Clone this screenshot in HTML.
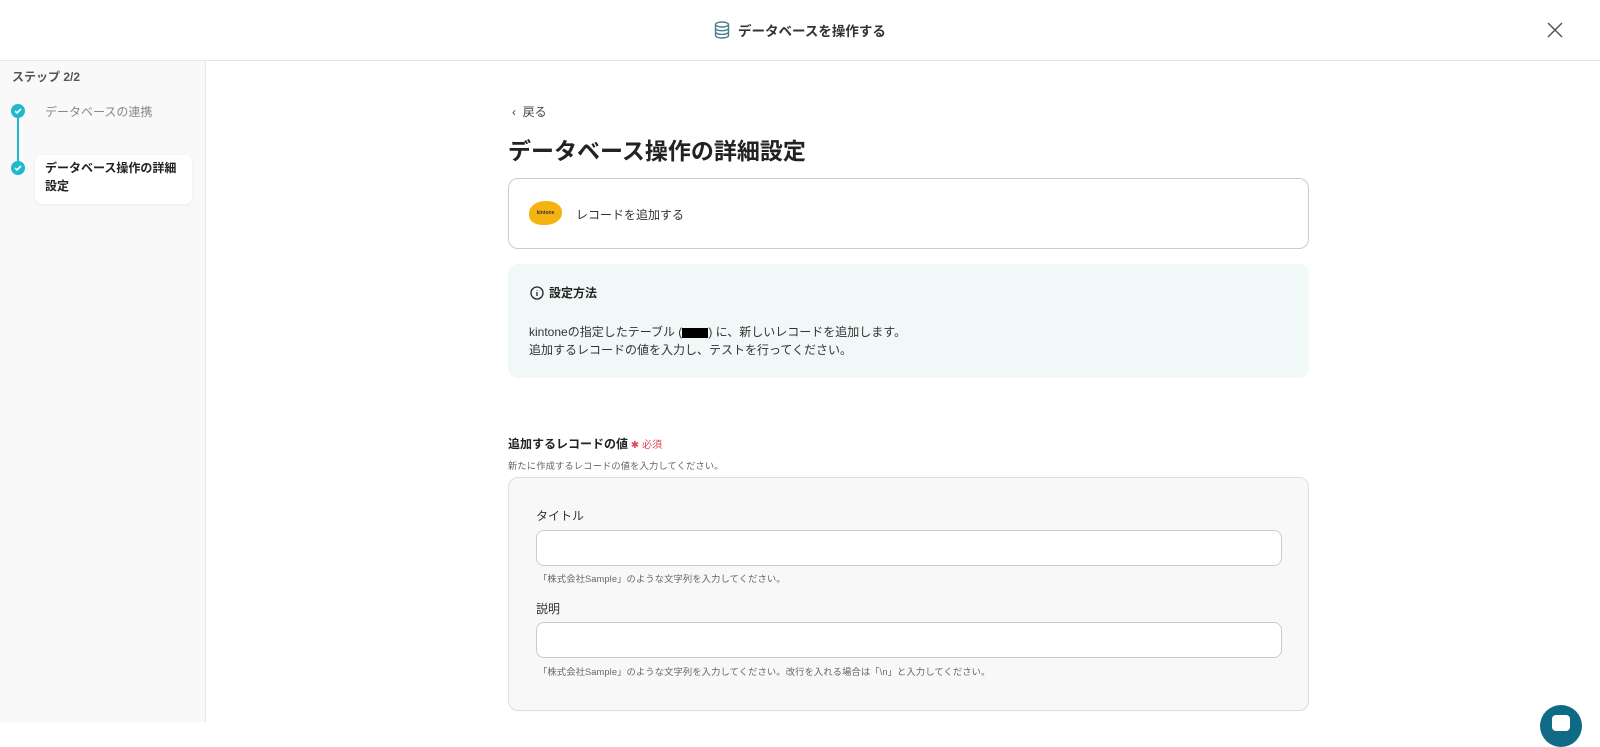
<!DOCTYPE html>
<html><head><meta charset="utf-8"><style>
*{box-sizing:border-box;margin:0;padding:0}
body{width:1600px;height:722px;overflow:hidden;background:#fff;font-family:"Liberation Sans","Noto Sans CJK JP",sans-serif;color:#222;position:relative}
.hdr{position:absolute;left:0;top:0;width:1600px;height:61px;border-bottom:1px solid #e6e6e6;background:#fff}
.hdr .t{position:absolute;left:714px;top:20px;font-size:13.5px;font-weight:bold;color:#333;display:flex;align-items:center;gap:8px}
.side{position:absolute;left:0;top:61px;width:206px;height:661px;background:#f9f9f9;border-right:1px solid #e8e8e8}
.abs{position:absolute}
.dot{width:14px;height:14px;border-radius:50%;background:#1fb8cc;display:flex;align-items:center;justify-content:center}
.box{position:absolute;border:1px solid #ccc;border-radius:10px}
.inp{position:absolute;left:536px;width:746px;height:36px;background:#fff;border:1px solid #ccc;border-radius:8px}
.sm{font-size:9.3px;color:#666;letter-spacing:0.1px}
</style></head><body>
<div class="hdr"><div class="t">
<svg width="16" height="18" viewBox="0 0 16 18" fill="none" stroke="#4a7d8a" stroke-width="1.4"><ellipse cx="8" cy="3.5" rx="6.5" ry="2.5"/><path d="M1.5 3.5v11c0 1.4 2.9 2.5 6.5 2.5s6.5-1.1 6.5-2.5v-11M1.5 7.2c0 1.4 2.9 2.5 6.5 2.5s6.5-1.1 6.5-2.5M1.5 10.9c0 1.4 2.9 2.5 6.5 2.5s6.5-1.1 6.5-2.5"/></svg>
データベースを操作する</div>
<svg class="abs" style="left:1547px;top:22px" width="16" height="16" stroke="#555" stroke-width="1.5"><path d="M1 1L15 15M15 1L1 15"/></svg>
</div>
<div class="side">
<div class="abs" style="left:12px;top:7px;font-size:12px;font-weight:bold;color:#555">ステップ 2/2</div>
<div class="abs" style="left:17px;top:52px;width:2px;height:56px;background:#1fb8cc"></div>
<div class="abs dot" style="left:11px;top:43px"><svg width="8" height="8" stroke="#fff" stroke-width="1.6" fill="none"><path d="M1 4l2 2 4-4"/></svg></div>
<div class="abs dot" style="left:11px;top:100px"><svg width="8" height="8" stroke="#fff" stroke-width="1.6" fill="none"><path d="M1 4l2 2 4-4"/></svg></div>
<div class="abs" style="left:45px;top:42px;font-size:12px;color:#888">データベースの連携</div>
<div class="abs" style="left:35px;top:94px;width:157px;height:49px;background:#fff;border-radius:7px;box-shadow:0 1px 3px rgba(0,0,0,.06)"></div>
<div class="abs" style="left:45px;top:98px;font-size:12px;font-weight:bold;color:#222;line-height:18px">データベース操作の詳細<br>設定</div>
</div>
<div class="abs" style="left:512px;top:103px;font-size:12px;color:#444">&lsaquo;&nbsp; 戻る</div>
<div class="abs" style="left:508px;top:132px;font-size:23px;font-weight:bold;color:#222">データベース操作の詳細設定</div>
<div class="box" style="left:508px;top:178px;width:801px;height:71px"></div>
<div class="abs" style="left:529px;top:201px;width:33px;height:24px;background:#f5b30f;border-radius:50% 45% 50% 40%;font-size:5px;color:#333;display:flex;align-items:center;justify-content:center;font-weight:bold">kintone</div>
<div class="abs" style="left:576px;top:206px;font-size:12px;color:#333">レコードを追加する</div>
<div class="abs" style="left:508px;top:264px;width:801px;height:114px;background:#f1f8f8;border-radius:10px"></div>
<div class="abs" style="left:530px;top:284px;font-size:12px;font-weight:bold;color:#222;display:flex;align-items:center;gap:5px"><svg width="14" height="14" fill="none" stroke="#222" stroke-width="1.3"><circle cx="7" cy="7" r="6"/><path d="M7 6v4M7 4v.5"/></svg>設定方法</div>
<div class="abs" style="left:529px;top:323px;font-size:12px;color:#333;line-height:18px">kintoneの指定したテーブル (<span style="display:inline-block;width:26px;height:10px;background:#000;vertical-align:middle"></span>) に、新しいレコードを追加します。<br>追加するレコードの値を入力し、テストを行ってください。</div>
<div class="abs" style="left:508px;top:435px;font-size:12px;font-weight:bold;color:#222">追加するレコードの値<span style="color:#e0435a;font-weight:normal;font-size:10px"> ✱ 必須</span></div>
<div class="abs sm" style="left:508px;top:458px">新たに作成するレコードの値を入力してください。</div>
<div class="abs" style="left:508px;top:477px;width:801px;height:234px;background:#f8f8f8;border:1px solid #ddd;border-radius:10px"></div>
<div class="abs" style="left:536px;top:507px;font-size:12px;color:#333">タイトル</div>
<div class="inp" style="top:530px"></div>
<div class="abs sm" style="left:538px;top:571px">「株式会社Sample」のような文字列を入力してください。</div>
<div class="abs" style="left:536px;top:600px;font-size:12px;color:#333">説明</div>
<div class="inp" style="top:622px"></div>
<div class="abs sm" style="left:538px;top:664px">「株式会社Sample」のような文字列を入力してください。改行を入れる場合は「\n」と入力してください。</div>
<div class="abs" style="left:1540px;top:705px;width:42px;height:42px;border-radius:50%;background:#0f6b85"><div class="abs" style="left:12px;top:10px;width:18px;height:16px;background:#fff;border-radius:4px"></div></div>
</body></html>
